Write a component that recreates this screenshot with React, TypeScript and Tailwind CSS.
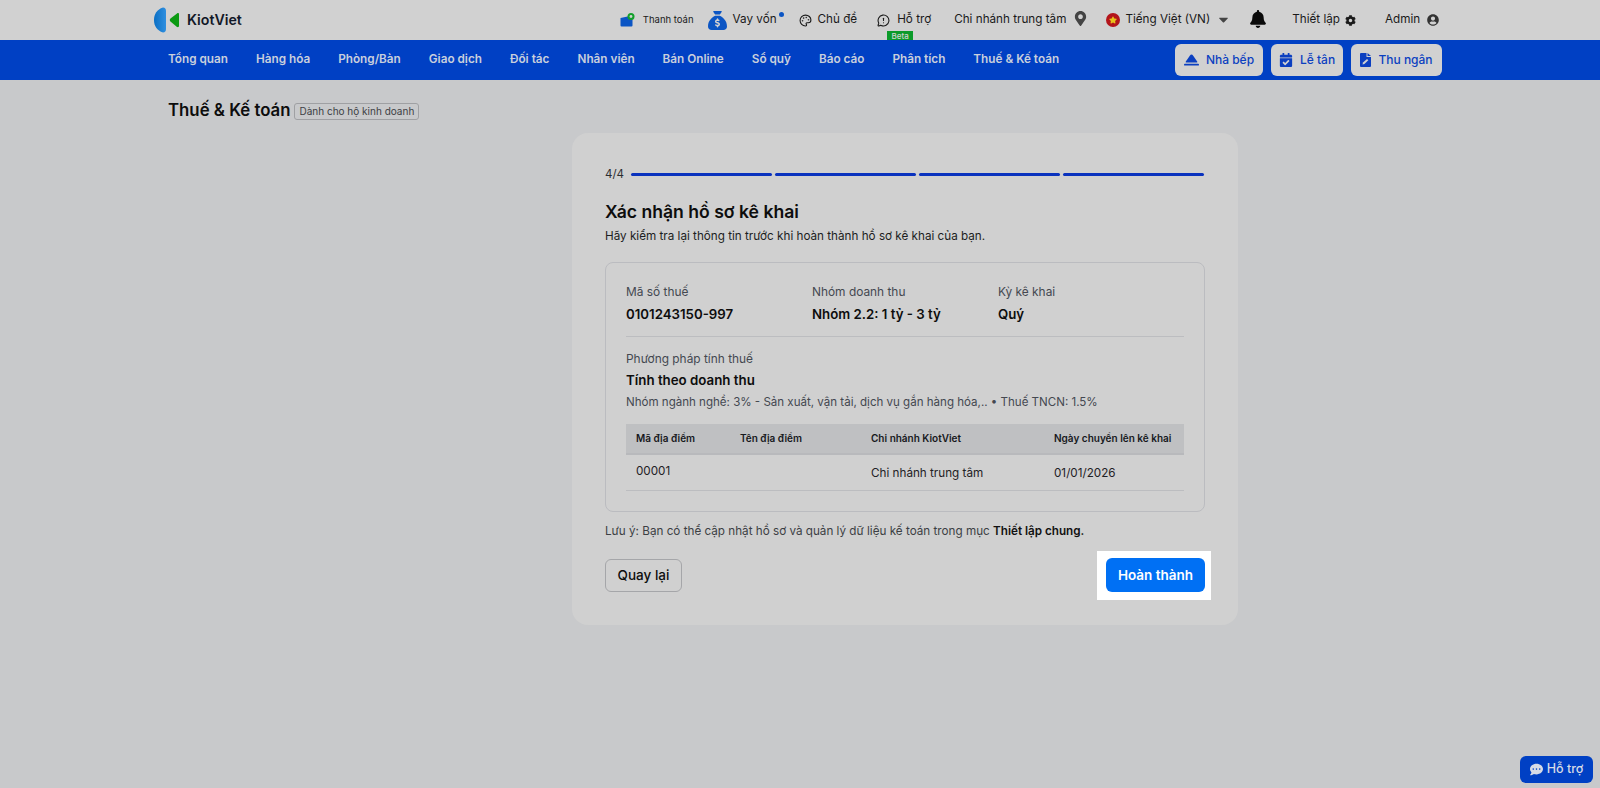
import React from 'react';
import { Palette, MessageCircleWarning } from 'lucide-react';
import { FaBell, FaCalendarCheck, FaCaretDown, FaCog, FaCommentDots, FaMapMarkerAlt, FaStar, FaUserCircle } from 'react-icons/fa';
import { FaSackDollar } from 'react-icons/fa6';

const navItems = ['Tổng quan', 'Hàng hóa', 'Phòng/Bàn', 'Giao dịch', 'Đối tác', 'Nhân viên', 'Bán Online', 'Sổ quỹ', 'Báo cáo', 'Phân tích', 'Thuế & Kế toán'];

function KitchenIcon() {
  return (
    <svg width="15" height="12" viewBox="0 0 15 12" fill="currentColor">
      <path d="M7.5 0.5 C8.2 0.5 8.6 0.9 9 1.4 L13.2 7.6 C13.5 8.2 13.2 8.6 12.6 8.6 L2.4 8.6 C1.8 8.6 1.5 8.2 1.8 7.6 L6 1.4 C6.4 0.9 6.8 0.5 7.5 0.5 Z" />
      <rect x="0" y="9.8" width="15" height="1.8" rx="0.9" />
    </svg>
  );
}

function ReceptionIcon() {
  return <FaCalendarCheck size={14} />;
}

function CashierIcon() {
  return (
    <svg width="11" height="14" viewBox="0 0 11 14" fill="currentColor">
      <path d="M1 0 L6.5 0 L6.5 4 L11 4 L11 13 Q11 14 10 14 L1 14 Q0 14 0 13 L0 1 Q0 0 1 0 Z" />
      <path d="M7.5 0 L11 3 L7.5 3 Z" />
      <path d="M2.5 11.5 L3 9.5 L7 6 L8.3 7.3 L4.4 10.9 Z" fill="#d1d1d1" />
    </svg>
  );
}

const saleButtons = [
  { label: 'Nhà bếp', icon: KitchenIcon, width: 'w-[88px]' },
  { label: 'Lễ tân', icon: ReceptionIcon, width: 'w-[72px]' },
  { label: 'Thu ngân', icon: CashierIcon, width: 'w-[91px]' },
];

function Logo() {
  return (
    <svg width="26" height="26" viewBox="0 0 26 26">
      <defs>
        <linearGradient id="logo-blue" x1="0" x2="1" y1="0" y2="0">
          <stop offset="0" stopColor="#0a6fc4" />
          <stop offset="1" stopColor="#2f8fe0" />
        </linearGradient>
      </defs>
      <path d="M9 0.5 C3 2.5 0 7 0 13 C0 19 3 23.5 9 25.5 C11 25.5 12 24 12 22 L12 4 C12 2 11 0.5 9 0.5 Z" fill="url(#logo-blue)" />
      <path d="M25 7.2 L25 19 C25 20 24 20.4 23 20 L16.5 14.6 C15.5 13.6 15.5 12.6 16.5 11.6 L23 6.4 C24 5.8 25 6.2 25 7.2 Z" fill="#0b9a12" />
    </svg>
  );
}

function WalletIcon() {
  return (
    <svg width="15" height="14" viewBox="0 0 15 14">
      <path d="M0.5 5 L10 3 L11 5 L12 5 Q12.5 5 12.5 6 L12.5 12.5 Q12.5 13.5 11.5 13.5 L1.5 13.5 Q0.5 13.5 0.5 12.5 Z" fill="#0b55c4" />
      <circle cx="11" cy="3.5" r="3.5" fill="#12a02a" />
      <circle cx="11" cy="3.5" r="1.4" fill="#d1d1d1" />
    </svg>
  );
}

function FlagIcon() {
  return (
    <span className="flex h-[14px] w-[14px] items-center justify-center rounded-full bg-[#b3141a] text-[#e8c21a]">
      <FaStar size={8} />
    </span>
  );
}

function TopBar() {
  return (
    <div className="flex h-10 items-center bg-[#d1d1d1] pl-[154px] text-[11.7px] text-[#1a1a1a]">
      <Logo />
      <span className="ml-[7px] text-[14.2px] font-semibold text-[#111827]">KiotViet</span>
      <div className="ml-[378px] flex items-center">
        <WalletIcon />
        <span className="ml-[8px] text-[9.5px]">Thanh toán</span>
        <FaSackDollar size={19} className="ml-[14px] text-[#0b55c4]" />
        <span className="relative ml-[6px]">
          Vay vốn
          <span className="absolute -right-[7px] top-[1px] h-[5px] w-[5px] rounded-full bg-[#0b55c4]" />
        </span>
        <Palette size={13} className="ml-[22px]" />
        <span className="ml-[6px]">Chủ đề</span>
        <MessageCircleWarning size={13} className="ml-[20px]" />
        <span className="relative ml-[7px]">
          Hỗ trợ
          <span className="absolute -left-[10px] top-[20px] flex h-[9px] w-[26px] items-center justify-center bg-[#0b9a2a] text-[8px] font-medium text-[#d1d1d1]">Beta</span>
        </span>
        <span className="ml-[23px]">Chi nhánh trung tâm</span>
        <FaMapMarkerAlt size={15} className="ml-[7px] -mt-[3px] text-[#444]" />
        <span className="ml-[18px]"><FlagIcon /></span>
        <span className="ml-[5px]">Tiếng Việt (VN)</span>
        <FaCaretDown size={15} className="ml-[6px] -mt-[2px] text-[#444]" />
        <FaBell size={18} className="ml-[18px] -mt-[3px] text-[#0a0a0a]" />
        <span className="ml-[25px]">Thiết lập</span>
        <FaCog size={11} className="ml-[5px]" />
        <span className="ml-[29px]">Admin</span>
        <FaUserCircle size={12} className="ml-[7px] text-[#333]" />
      </div>
    </div>
  );
}

function NavBar() {
  return (
    <div className="flex h-10 items-center justify-between bg-[#0040c4] pl-[168px] pr-[158px]">
      <div className="flex gap-[28px] text-[11.75px] font-semibold text-[#c9cfdc]">
        {navItems.map((item) => (
          <span key={item}>{item}</span>
        ))}
      </div>
      <div className="flex gap-2">
        {saleButtons.map((b) => {
          const Icon = b.icon;
          return (
            <div key={b.label} className={`flex h-8 ${b.width} items-center justify-center gap-[7px] rounded-md bg-[#d1d1d1] text-[12px] font-medium text-[#0b3fc0]`}>
              <Icon />
              {b.label}
            </div>
          );
        })}
      </div>
    </div>
  );
}

function Field({ label, value, width }: { label: string; value: string; width: string }) {
  return (
    <div className={width}>
      <div className="text-[11.9px] leading-[18px] text-[#444850]">{label}</div>
      <div className="mt-[3px] text-[13.25px] font-semibold leading-5 text-[#0d0d0d]">{value}</div>
    </div>
  );
}

function SummaryBox() {
  return (
    <div className="mt-[17px] h-[250px] rounded-lg border border-[#bbbcc0] px-[20px] pt-[20px]">
      <div className="flex border-b border-[#bcbdc0] pb-[12px]">
        <Field label="Mã số thuế" value="0101243150-997" width="w-[186px]" />
        <Field label="Nhóm doanh thu" value="Nhóm 2.2: 1 tỷ - 3 tỷ" width="w-[186px]" />
        <Field label="Kỳ kê khai" value="Quý" width="w-[186px]" />
      </div>
      <div className="mt-[13px] text-[11.9px] leading-[18px] text-[#444850]">Phương pháp tính thuế</div>
      <div className="mt-[2px] text-[13.3px] font-semibold leading-5 text-[#0d0d0d]">Tính theo doanh thu</div>
      <div className="mt-[3px] text-[11.55px] leading-[18px] text-[#444850]">Nhóm ngành nghề: 3% - Sản xuất, vận tải, dịch vụ gắn hàng hóa,.. • Thuế TNCN: 1.5%</div>
      <div className="mt-[13px]">
        <div className="flex h-[31px] items-center border-b-2 border-[#b8b9bc] bg-[#bfc0c2] pl-[10px] text-[10px] font-semibold text-[#17191d]">
          <span className="w-[104px]">Mã địa điểm</span>
          <span className="w-[131px]">Tên địa điểm</span>
          <span className="w-[183px]">Chi nhánh KiotViet</span>
          <span>Ngày chuyển lên kê khai</span>
        </div>
        <div className="flex h-[36px] items-center border-b border-[#bcbdc0] pl-[10px] pt-[3px] text-[11.7px] text-[#1f2125]">
          <span className="-mt-[4px] w-[104px]">00001</span>
          <span className="w-[131px]" />
          <span className="w-[183px]">Chi nhánh trung tâm</span>
          <span>01/01/2026</span>
        </div>
      </div>
    </div>
  );
}

export default function App() {
  return (
    <div className="flex min-h-[788px] flex-col bg-[#c8c9cb] font-['Inter',sans-serif]">
      <TopBar />
      <NavBar />

      <div className="relative flex-1 pl-[168px]">
        <div className="flex h-[53px] items-center gap-[4px] pt-[9px]">
          <h1 className="text-[16.8px] font-semibold text-[#0d0d0d]">Thuế & Kế toán</h1>
          <span className="rounded-[3px] border border-[#9fa0a3] px-[4px] text-[10px] leading-[15px] text-[#3c3f44]">Dành cho hộ kinh doanh</span>
        </div>

        <div className="ml-[404px] h-[492px] w-[666px] rounded-2xl bg-[#d0d0d0] px-[33px] pt-[33px]">
          <div className="flex items-center gap-[7px]">
            <span className="text-[11.5px] leading-4 text-[#2b2d31]">4/4</span>
            <div className="flex flex-1 gap-[3px] pr-px">
              <div className="h-[3px] flex-1 rounded-full bg-[#0a32be]" />
              <div className="h-[3px] flex-1 rounded-full bg-[#0a32be]" />
              <div className="h-[3px] flex-1 rounded-full bg-[#0a32be]" />
              <div className="h-[3px] flex-1 rounded-full bg-[#0a32be]" />
            </div>
          </div>
          <h2 className="mt-[17px] text-[17.6px] font-semibold leading-[26px] text-[#0d0d0d]">Xác nhận hồ sơ kê khai</h2>
          <p className="mt-[2px] text-[11.7px] leading-[18px] text-[#1c1e22]">Hãy kiểm tra lại thông tin trước khi hoàn thành hồ sơ kê khai của bạn.</p>

          <SummaryBox />

          <p className="mt-[10px] text-[11.7px] leading-[18px] text-[#3c3f44]">
            Lưu ý: Bạn có thể cập nhật hồ sơ và quản lý dữ liệu kế toán trong mục <b className="font-semibold text-[#111]">Thiết lập chung.</b>
          </p>

          <div className="mt-[11px] flex items-center justify-between">
            <button className="h-[33px] w-[77px] rounded-md border border-[#a5a6a9] text-[13.5px] font-medium text-[#0d0d0d]">Quay lại</button>
            <div className="-mr-[6px] bg-white pb-[8px] pl-[9px] pr-[6px] pt-[7px]">
              <button className="block h-[34px] w-[99px] rounded-md bg-[#0070f4] text-[13.5px] font-semibold text-white">Hoàn thành</button>
            </div>
          </div>
        </div>

        <div className="absolute bottom-[5px] right-[7px] flex h-[27px] w-[73px] items-center justify-center gap-[4px] rounded-md bg-[#0040c4] text-[12.5px] font-medium text-[#d6dbe6]">
          <FaCommentDots size={13} />
          Hỗ trợ
        </div>
      </div>
    </div>
  );
}
